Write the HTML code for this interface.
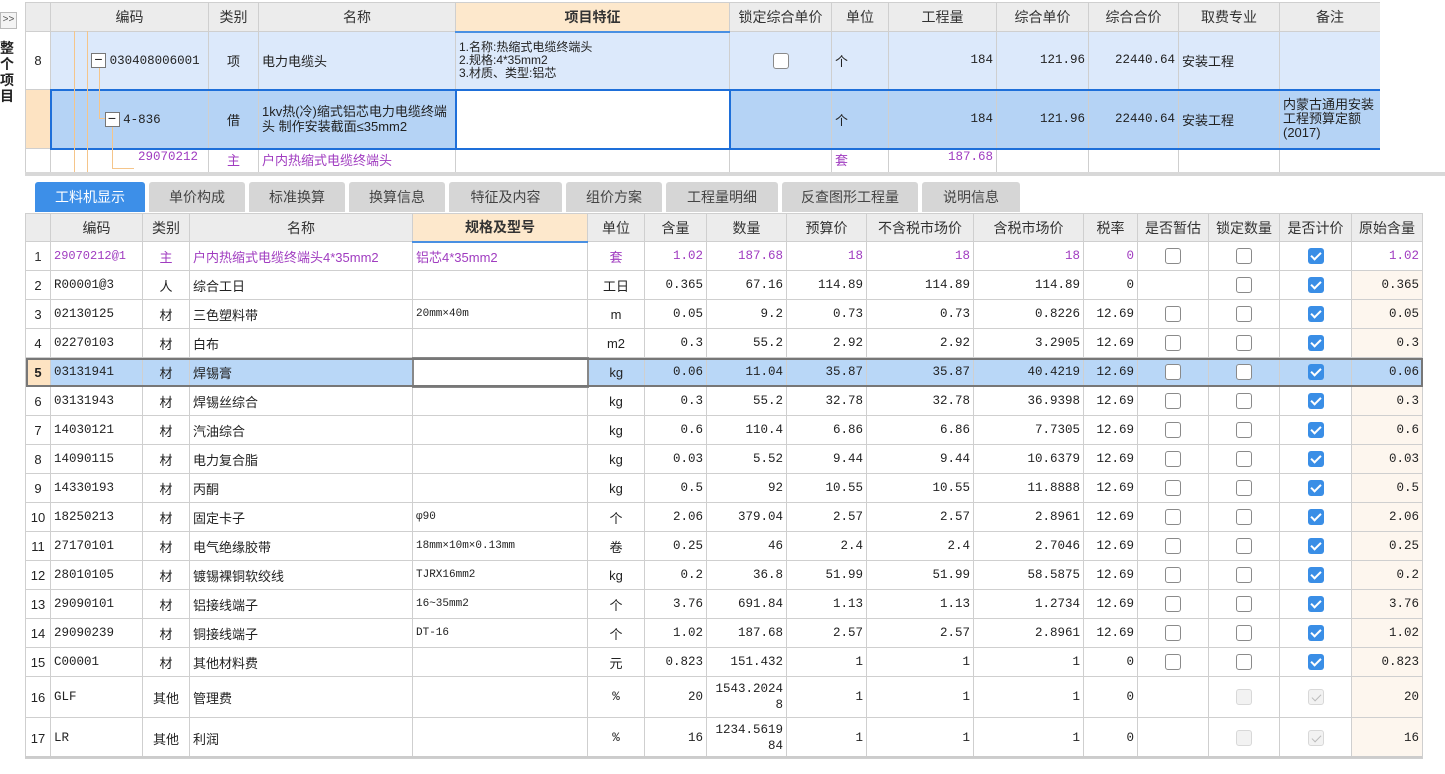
<!DOCTYPE html>
<html><head><meta charset="utf-8"><style>
*{box-sizing:border-box;margin:0;padding:0}
body{width:1445px;height:774px;background:#fff;position:relative;overflow:hidden;font-family:"Liberation Sans","Noto Sans CJK SC",sans-serif;font-size:13px;color:#222}
table{border-collapse:collapse;table-layout:fixed;position:absolute}
td,th{border:1px solid #cfcfcf;overflow:hidden;white-space:nowrap;padding:0 3px;font-weight:normal}
th{background:#ececec;font-size:14px;color:#333;text-align:center}
th.or{background:#fde8cc;font-weight:bold;border-bottom:2px solid #4a90e2}
.r{text-align:right;font-family:"Liberation Mono","Noto Sans CJK SC",monospace;font-size:12.5px}
.c{text-align:center}
.p{color:#a03cc0}
.cb{display:inline-block;width:16px;height:16px;border:1px solid #8a8a8a;border-radius:3px;background:#fff;vertical-align:middle}
.ck{display:inline-block;width:16px;height:16px;border-radius:3px;background:#3a8ee6;vertical-align:middle;position:relative}
.ck:after{content:"";position:absolute;left:5px;top:2px;width:4px;height:8px;border:solid #fff;border-width:0 2px 2px 0;transform:rotate(45deg)}
.dis{display:inline-block;width:16px;height:16px;border:1px solid #d8d8d8;border-radius:3px;background:#f2f2f2;vertical-align:middle;position:relative}
.dck:after{content:"";position:absolute;left:5px;top:2px;width:4px;height:8px;border:solid #bbb;border-width:0 1px 1px 0;transform:rotate(45deg)}
.tab{position:absolute;top:182px;height:30px;background:#d6d6d6;color:#444;font-size:14px;text-align:center;line-height:30px;border-radius:3px 3px 0 0}
.mono{font-family:"Liberation Mono","Noto Sans CJK SC",monospace;font-size:12.5px}
.box{display:inline-block;width:15px;height:15px;border:1px solid #777;background:#fff;vertical-align:middle;text-align:center;line-height:11px;font-size:14px;position:relative;z-index:2}
</style></head><body>
<div style="position:absolute;left:0;top:12px;width:17px;height:17px;border:1px solid #bbb;background:#f4f4f4;font-size:10px;line-height:14px;text-align:center;color:#555">&gt;&gt;</div>
<div style="position:absolute;left:0;top:40px;width:14px;font-weight:bold;font-size:14px;line-height:16px;text-align:center">整个项目</div>
<div style="position:absolute;left:25px;top:0;width:1355px;height:172px;overflow:hidden">
<table style="left:0;top:2px;width:1355px">
<colgroup><col width="25"><col width="158"><col width="50"><col width="197"><col width="274"><col width="102"><col width="57"><col width="108"><col width="92"><col width="90"><col width="101"><col width="101"></colgroup>
<tr style="height:29px"><th></th><th>编码</th><th>类别</th><th>名称</th><th class="or">项目特征</th><th>锁定综合单价</th><th>单位</th><th>工程量</th><th>综合单价</th><th>综合合价</th><th>取费专业</th><th>备注</th></tr>
<tr style="height:58px;background:#dce9fb"><td class="c" style="background:#fff">8</td><td style="padding-left:40px"><span class="box">−</span> <span class="mono">030408006001</span></td><td class="c">项</td><td>电力电缆头</td><td style="font-size:12px;line-height:13px;white-space:normal">1.名称:热缩式电缆终端头<br>2.规格:4*35mm2<br>3.材质、类型:铝芯</td><td class="c"><span class="cb"></span></td><td>个</td><td class="r">184</td><td class="r">121.96</td><td class="r">22440.64</td><td>安装工程</td><td></td></tr>
<tr style="height:59px;background:#b5d3f5"><td style="background:#fde3c2"></td><td style="padding-left:53px;border-left:2px solid #1e6fd9;border-top:2px solid #1e6fd9;border-bottom:2px solid #1e6fd9"><span class="box">−</span> <span class="mono">4-836</span></td><td class="c" style="border-top:2px solid #1e6fd9;border-bottom:2px solid #1e6fd9">借</td><td style="white-space:normal;line-height:15px;font-size:13px;border-top:2px solid #1e6fd9;border-bottom:2px solid #1e6fd9">1kv热(冷)缩式铝芯电力电缆终端头 制作安装截面≤35mm2</td><td style="background:#fff;border:2px solid #1e6fd9"></td><td style="border-top:2px solid #1e6fd9;border-bottom:2px solid #1e6fd9"></td><td style="border-top:2px solid #1e6fd9;border-bottom:2px solid #1e6fd9">个</td><td class="r" style="border-top:2px solid #1e6fd9;border-bottom:2px solid #1e6fd9">184</td><td class="r" style="border-top:2px solid #1e6fd9;border-bottom:2px solid #1e6fd9">121.96</td><td class="r" style="border-top:2px solid #1e6fd9;border-bottom:2px solid #1e6fd9">22440.64</td><td style="border-top:2px solid #1e6fd9;border-bottom:2px solid #1e6fd9">安装工程</td><td style="white-space:normal;line-height:14px;font-size:13px;border:2px solid #1e6fd9;border-left:1px solid #cfcfcf">内蒙古通用安装工程预算定额(2017)</td></tr>
<tr style="height:28px;vertical-align:top"><td></td><td style="padding-left:87px" class="p mono">29070212</td><td class="c p">主</td><td class="p">户内热缩式电缆终端头</td><td></td><td></td><td class="p">套</td><td class="r p">187.68</td><td></td><td></td><td></td><td></td></tr>
</table>
<div style="position:absolute;left:49px;top:31px;width:1px;height:141px;background:#f5c58a"></div>
<div style="position:absolute;left:62px;top:31px;width:1px;height:141px;background:#f5c58a"></div>
<div style="position:absolute;left:74px;top:68px;width:1px;height:50px;background:#f5c58a"></div>
<div style="position:absolute;left:74px;top:118px;width:8px;height:1px;background:#f5c58a"></div>
<div style="position:absolute;left:87px;top:127px;width:1px;height:41px;background:#f5c58a"></div>
<div style="position:absolute;left:87px;top:168px;width:22px;height:1px;background:#f5c58a"></div>
</div>
<div style="position:absolute;left:25px;top:172px;width:1420px;height:4px;background:#d8d8d8"></div>
<div class="tab" style="left:35px;width:110px;background:#3d8fe8;color:#fff">工料机显示</div>
<div class="tab" style="left:149px;width:96px">单价构成</div>
<div class="tab" style="left:249px;width:96px">标准换算</div>
<div class="tab" style="left:349px;width:96px">换算信息</div>
<div class="tab" style="left:449px;width:113px">特征及内容</div>
<div class="tab" style="left:566px;width:96px">组价方案</div>
<div class="tab" style="left:666px;width:112px">工程量明细</div>
<div class="tab" style="left:782px;width:136px">反查图形工程量</div>
<div class="tab" style="left:922px;width:98px">说明信息</div>
<table style="left:25px;top:213px;width:1397px">
<colgroup><col width="25"><col width="92"><col width="47"><col width="223"><col width="175"><col width="57"><col width="62"><col width="80"><col width="80"><col width="107"><col width="110"><col width="54"><col width="71"><col width="71"><col width="72"><col width="71"></colgroup>
<tr style="height:28px"><th></th><th>编码</th><th>类别</th><th>名称</th><th class="or">规格及型号</th><th>单位</th><th>含量</th><th>数量</th><th>预算价</th><th>不含税市场价</th><th>含税市场价</th><th>税率</th><th>是否暂估</th><th>锁定数量</th><th>是否计价</th><th>原始含量</th></tr>
<tr style="height:29px" class="p"><td class="c" style="color:#333">1</td><td class="mono" style="font-size:12px">29070212@1</td><td class="c">主</td><td>户内热缩式电缆终端头4*35mm2</td><td>铝芯4*35mm2</td><td class="c">套</td><td class="r">1.02</td><td class="r">187.68</td><td class="r">18</td><td class="r">18</td><td class="r">18</td><td class="r">0</td><td class="c"><span class="cb"></span></td><td class="c"><span class="cb"></span></td><td class="c"><span class="ck"></span></td><td class="r">1.02</td></tr>
<tr style="height:29px"><td class="c">2</td><td class="mono">R00001@3</td><td class="c">人</td><td>综合工日</td><td></td><td class="c">工日</td><td class="r">0.365</td><td class="r">67.16</td><td class="r">114.89</td><td class="r">114.89</td><td class="r">114.89</td><td class="r">0</td><td></td><td class="c"><span class="cb"></span></td><td class="c"><span class="ck"></span></td><td class="r" style="background:#fdf6ee">0.365</td></tr>
<tr style="height:29px"><td class="c">3</td><td class="mono">02130125</td><td class="c">材</td><td>三色塑料带</td><td class="mono" style="font-size:11px">20mm×40m</td><td class="c">m</td><td class="r">0.05</td><td class="r">9.2</td><td class="r">0.73</td><td class="r">0.73</td><td class="r">0.8226</td><td class="r">12.69</td><td class="c"><span class="cb"></span></td><td class="c"><span class="cb"></span></td><td class="c"><span class="ck"></span></td><td class="r" style="background:#fdf6ee">0.05</td></tr>
<tr style="height:29px"><td class="c">4</td><td class="mono">02270103</td><td class="c">材</td><td>白布</td><td></td><td class="c">m2</td><td class="r">0.3</td><td class="r">55.2</td><td class="r">2.92</td><td class="r">2.92</td><td class="r">3.2905</td><td class="r">12.69</td><td class="c"><span class="cb"></span></td><td class="c"><span class="cb"></span></td><td class="c"><span class="ck"></span></td><td class="r" style="background:#fdf6ee">0.3</td></tr>
<tr style="height:29px;background:#b9d7f7;outline:2px solid #777;outline-offset:-2px"><td class="c" style="background:#fde3c2;font-weight:bold">5</td><td class="mono">03131941</td><td class="c">材</td><td>焊锡膏</td><td style="background:#fff;border:2px solid #888"></td><td class="c">kg</td><td class="r">0.06</td><td class="r">11.04</td><td class="r">35.87</td><td class="r">35.87</td><td class="r">40.4219</td><td class="r">12.69</td><td class="c"><span class="cb"></span></td><td class="c"><span class="cb"></span></td><td class="c"><span class="ck"></span></td><td class="r">0.06</td></tr>
<tr style="height:29px"><td class="c">6</td><td class="mono">03131943</td><td class="c">材</td><td>焊锡丝综合</td><td></td><td class="c">kg</td><td class="r">0.3</td><td class="r">55.2</td><td class="r">32.78</td><td class="r">32.78</td><td class="r">36.9398</td><td class="r">12.69</td><td class="c"><span class="cb"></span></td><td class="c"><span class="cb"></span></td><td class="c"><span class="ck"></span></td><td class="r" style="background:#fdf6ee">0.3</td></tr>
<tr style="height:29px"><td class="c">7</td><td class="mono">14030121</td><td class="c">材</td><td>汽油综合</td><td></td><td class="c">kg</td><td class="r">0.6</td><td class="r">110.4</td><td class="r">6.86</td><td class="r">6.86</td><td class="r">7.7305</td><td class="r">12.69</td><td class="c"><span class="cb"></span></td><td class="c"><span class="cb"></span></td><td class="c"><span class="ck"></span></td><td class="r" style="background:#fdf6ee">0.6</td></tr>
<tr style="height:29px"><td class="c">8</td><td class="mono">14090115</td><td class="c">材</td><td>电力复合脂</td><td></td><td class="c">kg</td><td class="r">0.03</td><td class="r">5.52</td><td class="r">9.44</td><td class="r">9.44</td><td class="r">10.6379</td><td class="r">12.69</td><td class="c"><span class="cb"></span></td><td class="c"><span class="cb"></span></td><td class="c"><span class="ck"></span></td><td class="r" style="background:#fdf6ee">0.03</td></tr>
<tr style="height:29px"><td class="c">9</td><td class="mono">14330193</td><td class="c">材</td><td>丙酮</td><td></td><td class="c">kg</td><td class="r">0.5</td><td class="r">92</td><td class="r">10.55</td><td class="r">10.55</td><td class="r">11.8888</td><td class="r">12.69</td><td class="c"><span class="cb"></span></td><td class="c"><span class="cb"></span></td><td class="c"><span class="ck"></span></td><td class="r" style="background:#fdf6ee">0.5</td></tr>
<tr style="height:29px"><td class="c" style="padding:0">10</td><td class="mono">18250213</td><td class="c">材</td><td>固定卡子</td><td class="mono" style="font-size:11px">φ90</td><td class="c">个</td><td class="r">2.06</td><td class="r">379.04</td><td class="r">2.57</td><td class="r">2.57</td><td class="r">2.8961</td><td class="r">12.69</td><td class="c"><span class="cb"></span></td><td class="c"><span class="cb"></span></td><td class="c"><span class="ck"></span></td><td class="r" style="background:#fdf6ee">2.06</td></tr>
<tr style="height:29px"><td class="c" style="padding:0">11</td><td class="mono">27170101</td><td class="c">材</td><td>电气绝缘胶带</td><td class="mono" style="font-size:11px">18mm×10m×0.13mm</td><td class="c">卷</td><td class="r">0.25</td><td class="r">46</td><td class="r">2.4</td><td class="r">2.4</td><td class="r">2.7046</td><td class="r">12.69</td><td class="c"><span class="cb"></span></td><td class="c"><span class="cb"></span></td><td class="c"><span class="ck"></span></td><td class="r" style="background:#fdf6ee">0.25</td></tr>
<tr style="height:29px"><td class="c" style="padding:0">12</td><td class="mono">28010105</td><td class="c">材</td><td>镀锡裸铜软绞线</td><td class="mono" style="font-size:11px">TJRX16mm2</td><td class="c">kg</td><td class="r">0.2</td><td class="r">36.8</td><td class="r">51.99</td><td class="r">51.99</td><td class="r">58.5875</td><td class="r">12.69</td><td class="c"><span class="cb"></span></td><td class="c"><span class="cb"></span></td><td class="c"><span class="ck"></span></td><td class="r" style="background:#fdf6ee">0.2</td></tr>
<tr style="height:29px"><td class="c" style="padding:0">13</td><td class="mono">29090101</td><td class="c">材</td><td>铝接线端子</td><td class="mono" style="font-size:11px">16~35mm2</td><td class="c">个</td><td class="r">3.76</td><td class="r">691.84</td><td class="r">1.13</td><td class="r">1.13</td><td class="r">1.2734</td><td class="r">12.69</td><td class="c"><span class="cb"></span></td><td class="c"><span class="cb"></span></td><td class="c"><span class="ck"></span></td><td class="r" style="background:#fdf6ee">3.76</td></tr>
<tr style="height:29px"><td class="c" style="padding:0">14</td><td class="mono">29090239</td><td class="c">材</td><td>铜接线端子</td><td class="mono" style="font-size:11px">DT-16</td><td class="c">个</td><td class="r">1.02</td><td class="r">187.68</td><td class="r">2.57</td><td class="r">2.57</td><td class="r">2.8961</td><td class="r">12.69</td><td class="c"><span class="cb"></span></td><td class="c"><span class="cb"></span></td><td class="c"><span class="ck"></span></td><td class="r" style="background:#fdf6ee">1.02</td></tr>
<tr style="height:29px"><td class="c" style="padding:0">15</td><td class="mono">C00001</td><td class="c">材</td><td>其他材料费</td><td></td><td class="c">元</td><td class="r">0.823</td><td class="r">151.432</td><td class="r">1</td><td class="r">1</td><td class="r">1</td><td class="r">0</td><td class="c"><span class="cb"></span></td><td class="c"><span class="cb"></span></td><td class="c"><span class="ck"></span></td><td class="r" style="background:#fdf6ee">0.823</td></tr>
<tr style="height:41px"><td class="c" style="padding:0">16</td><td class="mono">GLF</td><td class="c">其他</td><td>管理费</td><td></td><td class="c mono">%</td><td class="r">20</td><td class="r" style="white-space:normal;word-break:break-all;line-height:16px">1543.2024 8</td><td class="r">1</td><td class="r">1</td><td class="r">1</td><td class="r">0</td><td></td><td class="c"><span class="dis"></span></td><td class="c"><span class="dis dck"></span></td><td class="r" style="background:#fdf6ee">20</td></tr>
<tr style="height:41px"><td class="c" style="padding:0">17</td><td class="mono">LR</td><td class="c">其他</td><td>利润</td><td></td><td class="c mono">%</td><td class="r">16</td><td class="r" style="white-space:normal;word-break:break-all;line-height:16px">1234.5619 84</td><td class="r">1</td><td class="r">1</td><td class="r">1</td><td class="r">0</td><td></td><td class="c"><span class="dis"></span></td><td class="c"><span class="dis dck"></span></td><td class="r" style="background:#fdf6ee">16</td></tr>
</table>
<div style="position:absolute;left:25px;top:756px;width:1397px;height:2px;background:#ccc"></div>
</body></html>
